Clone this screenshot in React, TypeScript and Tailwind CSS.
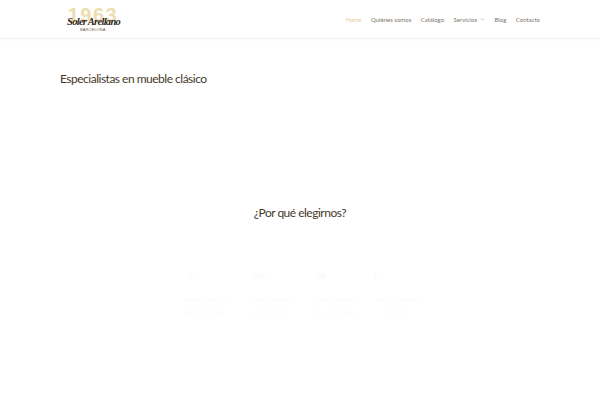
import React from 'react';
import { ChevronDown } from 'lucide-react';

const navItems = ['Quiénes somos', 'Catálogo'];

const features = [
  { col: 'w-[42px]', icon: 'w-[5px] ml-[5px]', title: 'Tradición familiar', text: 'desde hace años' },
  { col: 'w-[47px]', icon: 'w-[14px] ml-[5px]', title: 'Diseño a medida', text: 'para su hogar' },
  { col: 'w-[41px]', icon: 'w-[10px] ml-[2px]', title: 'Calidad artesanal', text: 'en cada mueble' },
  { col: 'w-[40px]', icon: 'w-[3px] -ml-[2px]', title: 'Servicio integral', text: 'a domicilio' },
];

const Logo = () => (
  <div className="relative w-[52px] h-[32px] ml-[7px] mt-[7px] flex flex-col items-center">
    <span className="font-['Liberation_Sans',sans-serif] font-bold text-[20px] leading-[16px] tracking-[1.5px] text-[#ecdeb0]">1963</span>
    <span className="absolute top-[9px] left-0 whitespace-nowrap font-['Liberation_Serif',serif] italic font-bold text-[10.5px] leading-[12px] tracking-[-0.7px] text-[#33261a]">
      Soler Arellano
    </span>
    <span className="absolute top-[20px] left-[13px] font-['Liberation_Sans',sans-serif] text-[4px] leading-[5px] tracking-[0.1px] text-[#6a5f50]">
      BARCELONA
    </span>
  </div>
);

export default function App() {
  return (
    <div className="w-[600px] h-[400px] bg-white overflow-hidden font-['Lato',sans-serif]">
      <header className="h-[39px] border-b border-[#f3f3f3] shadow-[0_1px_2px_rgba(0,0,0,0.03)]">
        <div className="w-[480px] mx-auto flex justify-between">
          <Logo />
          <nav className="flex items-center gap-[9.5px] h-[38px] text-[6px] text-[#7d766b]">
            <a className="text-[#dfce95]">Home</a>
            {navItems.map((item) => (
              <a key={item}>{item}</a>
            ))}
            <a className="flex items-center gap-[3px]">
              Servicios
              <ChevronDown size={5} />
            </a>
            <a>Blog</a>
            <a>Contacto</a>
          </nav>
        </div>
      </header>

      <main className="w-[480px] mx-auto">
        <h2 className="mt-[30px] text-[12px] leading-[20px] tracking-[-0.5px] text-[#46392b]">Especialistas en mueble clásico</h2>
        <h2 className="mt-[114px] text-[12px] leading-[20px] tracking-[-0.5px] text-[#46392b] text-center">¿Por qué elegirnos?</h2>

        <div className="mt-[50px] ml-[123px] flex gap-[21px]">
          {features.map((f) => (
            <div key={f.title} className={`${f.col} flex flex-col`}>
              <div className={`${f.icon} h-[6px] bg-[#fcfcfc]`} />
              <p className="mt-[16px] text-[6px] leading-[7px] text-[#fcfcfc] text-center whitespace-nowrap">{f.title}</p>
              <p className="mt-[6px] text-[6px] leading-[7px] text-[#fdfdfd] text-center whitespace-nowrap">{f.text}</p>
            </div>
          ))}
        </div>
      </main>
    </div>
  );
}
